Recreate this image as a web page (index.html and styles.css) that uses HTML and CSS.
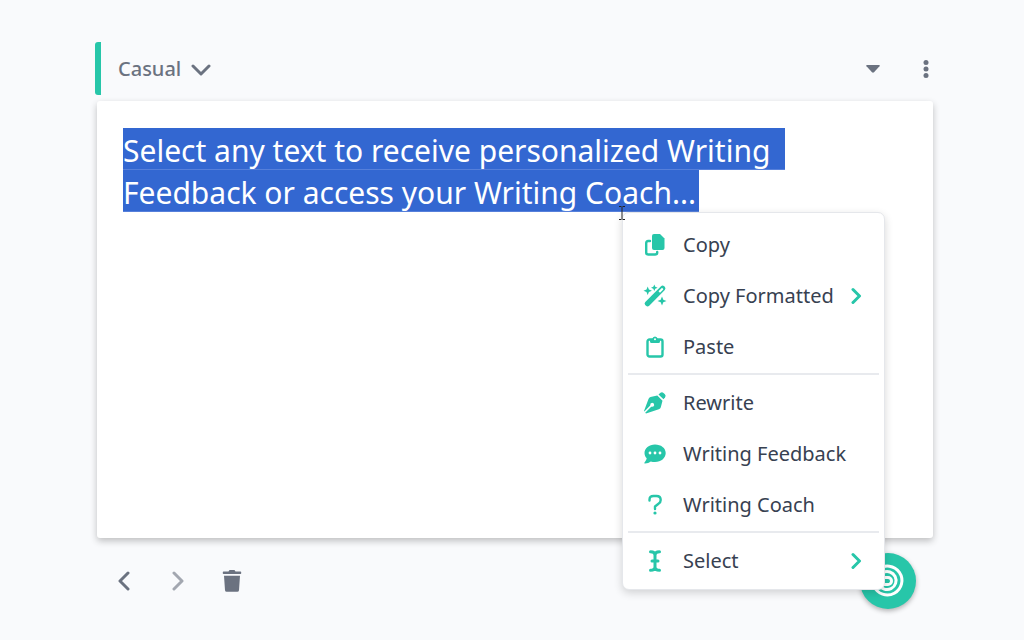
FILE: index.html
```html
<!DOCTYPE html>
<html lang="en">
<head>
  <meta charset="UTF-8" />
  <meta name="viewport" content="width=device-width, initial-scale=1" />
  <title>Writing Coach</title>
  <link rel="stylesheet" href="styles.css">
</head>
<body>
  <main class="page">
    <header class="toolbar">
      <label class="tone">
        <select class="tone-select" aria-label="Tone">
          <option>Casual</option>
        </select>
        <svg width="20" height="14" viewBox="0 0 20 14"><path d="M2 4l8 8 8-8" /></svg>
      </label>
      <div class="toolbar-actions">
        <button class="icon-btn" aria-label="Collapse">
          <svg width="14" height="8" viewBox="0 0 14 8"><path d="M1 0h12q1.300 .2.500 1.300L8 7.300q-1 .9-2 0L.5 1.300Q-.3.200 1 0z" /></svg>
        </button>
        <button class="icon-btn" aria-label="More">
          <svg width="6" height="20" viewBox="0 0 6 20"><circle cx="3" cy="3.500" r="2.500" /><circle cx="3" cy="10" r="2.500" /><circle cx="3" cy="16.500" r="2.500" /></svg>
        </button>
      </div>
    </header>

    <section class="card">
      <div class="editor" role="textbox" aria-label="Text" contenteditable="true" spellcheck="false">
        <div class="line line-wide">Select any text to receive personalized Writing</div>
        <div class="line">Feedback or access your Writing Coach...</div>
      </div>

      <div class="menu" role="menu">
        <button class="menu-item" role="menuitem">
          <svg class="menu-icon" viewBox="0 0 22 22">
            <path class="stroke" d="M6 7H4.200Q2.200 7 2.200 9v9.500q0 2 2 2h7q2 0 2-2V18" />
            <path d="M10 0h6L20.500 4.500V14q0 2-2 2H10q-2 0-2-2V2q0-2 2-2z" />
          </svg>
          <span class="menu-text">Copy</span>
        </button>
        <button class="menu-item" role="menuitem">
          <svg class="menu-icon" viewBox="0 0 22 22">
            <path fill-rule="evenodd" d="M1.300 17L17 1.200q1.600-1.400 3.200 0l.6.600q1.400 1.600 0 3.200L5.200 20.700q-1.600 1.400-3.200 0l-.8-.8q-1.300-1.500.1-2.900zM14.500 6.200l1.500 1.500 3-3q.5-.6.100-1-.8-.9-1.600-.5z" />
            <path d="M3.700 1.500l1.200 3 3 1.200-3 1.200-1.200 3-1.200-3-3-1.200 3-1.200zM10.300-.5l1 2.300 2.300 1-2.300 1-1 2.300-1-2.300-2.300-1 2.300-1zM18 11.500l1.300 3.200 3.200 1.300-3.200 1.300-1.300 3.200-1.300-3.200-3.200-1.300 3.200-1.300z" />
          </svg>
          <span class="menu-text">Copy Formatted</span>
          <svg class="menu-arrow" viewBox="0 0 12 18"><path d="M2 2.500l6.500 6.500L2 15.500" /></svg>
        </button>
        <button class="menu-item" role="menuitem">
          <svg class="menu-icon" viewBox="0 0 22 22">
            <rect class="stroke" x="3.500" y="3.500" width="15" height="17" rx="2" />
            <path d="M6 3h2.200Q8.800.500 11 .5T13.800 3H16v2.500q0 1.500-1.500 1.500h-7Q6 7 6 5.500z" />
            <circle cx="11" cy="3.300" r="1" fill="#fff" />
          </svg>
          <span class="menu-text">Paste</span>
        </button>
        <hr class="menu-line">
        <button class="menu-item" role="menuitem">
          <svg class="menu-icon" viewBox="0 0 22 22">
            <path d="M14.500 2.500L16.500.7q1.500-1.200 3 .2l1.400 1.400q1.400 1.500.2 3L19.500 7.300z" />
            <path d="M13.300 3.500l5.200 5.200-1.700 6.500q-.4 1.500-2 2L2 21.500l-.8-.8 6-6q2.300.5 3-1.400.2-2.300-2-2.500-2.200.3-2 2.800L.4 19.600 0 19 4.500 7q.5-1.500 2-2z" />
          </svg>
          <span class="menu-text">Rewrite</span>
        </button>
        <button class="menu-item" role="menuitem">
          <svg class="menu-icon" viewBox="0 0 22 22">
            <path d="M11 1.500C5 1.500.500 5.200.500 10c0 2.100.9 3.900 2.200 5.300-.3 1.700-1.200 3-2.200 4.100-.4.600 0 1 .5 1 2.200 0 4.300-.9 5.800-2 1.300.4 2.700.6 4.200.6 6 0 10.700-4 10.700-9S17 1.500 11 1.500z" />
            <g fill="#fff"><circle cx="6" cy="10" r="1.400" /><circle cx="11" cy="10" r="1.400" /><circle cx="16" cy="10" r="1.400" /></g>
          </svg>
          <span class="menu-text">Writing Feedback</span>
        </button>
        <button class="menu-item" role="menuitem">
          <svg class="menu-icon" viewBox="0 0 22 22">
            <path class="stroke" d="M5.500 6.500v-.7q0-3.800 4-3.800h3q4.200 0 4.200 4 0 2.500-2.200 3.800L11 12.500V15" />
            <circle cx="11" cy="19" r="1.600" />
          </svg>
          <span class="menu-text">Writing Coach</span>
        </button>
        <hr class="menu-line">
        <button class="menu-item" role="menuitem">
          <svg class="menu-icon" viewBox="0 0 22 22">
            <path class="stroke heavy" d="M6.500 1.700q4.500 0 4.500 3.600 0-3.600 4.500-3.600M11 5v12M6.500 20.300q4.500 0 4.500-3.600 0 3.600 4.500 3.600M8 11h6" />
          </svg>
          <span class="menu-text">Select</span>
          <svg class="menu-arrow" viewBox="0 0 12 18"><path d="M2 2.500l6.500 6.500L2 15.500" /></svg>
        </button>
      </div>

      <svg class="cursor" width="8" height="16" viewBox="0 0 8 16"><path d="M1 1.500h2.500M4.500 1.500H7M4 2v12M1 14.500h2.500M4.500 14.500H7" /></svg>
    </section>

    <footer class="bottom-bar">
      <button class="nav-btn" aria-label="Previous">
        <svg width="12" height="20" viewBox="0 0 12 20"><path class="chevron" d="M10 2l-8 8 8 8" /></svg>
      </button>
      <button class="nav-btn muted" aria-label="Next">
        <svg width="12" height="20" viewBox="0 0 12 20"><path class="chevron" d="M2 2l8 8-8 8" /></svg>
      </button>
      <button class="nav-btn" aria-label="Delete">
        <svg width="20" height="22" viewBox="0 0 20 22"><path d="M1.500 1.500h5L7.500 0h5l1 1.500h5q.7 0 .7.700v1q0 .8-.7.800h-17Q.800 4 .800 3.200v-1q0-.7.700-.7zM2 5.800h16l-1 14.400q-.2 1.500-1.700 1.500H4.700q-1.500 0-1.700-1.500z" /></svg>
      </button>
      <button class="coach-btn" aria-label="Writing Coach">
        <svg width="36" height="36" viewBox="0 0 36 36"><path d="M15 14.500h3a3.500 3.500 0 0 1 0 7h-5M13 9.500a9 9 0 1 1-4 12M8 6.500A14.500 14.500 0 1 1 4 23" /></svg>
      </button>
    </footer>
  </main>
</body>
</html>
```

FILE: styles.css
```css
* {
  box-sizing: border-box;
}

body {
  margin: 0;
  font-family: "Segoe UI", "Noto Sans", sans-serif;
  background: #f9fafc;
  color: #374151;
}

button {
  display: flex;
  align-items: center;
  justify-content: center;
  margin: 0;
  padding: 0;
  border: none;
  background: none;
  font-family: inherit;
  color: #6b7280;
  cursor: pointer;
}

svg {
  display: block;
  fill: currentColor;
}

.page {
  display: flex;
  flex-direction: column;
  min-height: 100vh;
  padding: 42px 91px 31px 95px;
}

/* top bar */
.toolbar {
  position: relative;
  display: flex;
  align-items: center;
  justify-content: space-between;
  height: 53px;
  margin-bottom: 6px;
  padding-left: 23px;
}

.toolbar::before {
  content: "";
  position: absolute;
  left: 0;
  top: 0;
  bottom: 0;
  width: 6px;
  border-radius: 3px 0 0 3px;
  background: #27c6a9;
}

.tone {
  display: flex;
  align-items: center;
  gap: 10px;
  color: #6b7280;
}

.tone-select {
  appearance: none;
  field-sizing: content;
  padding: 0;
  border: none;
  background: none;
  font-family: inherit;
  font-size: 20px;
  font-weight: 500;
  color: inherit;
}

.tone svg,
.chevron {
  fill: none;
  stroke: currentColor;
  stroke-width: 3;
  stroke-linecap: round;
  stroke-linejoin: round;
}

.tone svg {
  pointer-events: none;
}

.toolbar-actions {
  display: flex;
  gap: 39px;
}

.icon-btn {
  width: 14px;
  height: 28px;
}

/* editor */
.card {
  position: relative;
  flex: 1;
  margin-left: 2px;
  padding: 27px 26px;
  border-radius: 3px;
  background: #fff;
  box-shadow: 0 3px 7px rgba(0, 0, 0, 0.24);
}

.editor {
  font-size: 30px;
  line-height: 36px;
  color: #fff;
  outline: none;
}

.line {
  width: fit-content;
  padding: 5px 3px 0 0;
  border-bottom: 1px solid #5680db;
  background: #3367d1;
}

.line-wide {
  padding-right: 15px;
}

/* context menu */
.menu {
  position: absolute;
  top: 111px;
  left: 525px;
  z-index: 2;
  width: 263px;
  padding: 6px 5px 3px;
  border: 1px solid #e5e7eb;
  border-radius: 7px;
  background: #fff;
  box-shadow: 0 3px 8px rgba(0, 0, 0, 0.16);
}

.menu-item {
  justify-content: flex-start;
  width: 100%;
  height: 51px;
  padding: 0 16px;
  font-size: 20px;
  color: #27c6a9;
}

.menu-icon {
  width: 22px;
  height: 22px;
  margin-right: 17px;
  overflow: visible;
}

.menu-text {
  flex: 1;
  text-align: left;
  white-space: nowrap;
  color: #374151;
}

.menu-arrow {
  width: 12px;
  height: 18px;
}

.menu-arrow path,
.stroke {
  fill: none;
  stroke: currentColor;
  stroke-width: 2.4;
  stroke-linecap: round;
  stroke-linejoin: round;
}

.menu-arrow path,
.heavy {
  stroke-width: 3;
}

.menu-line {
  height: 2px;
  margin: 1px 0 2px;
  border: none;
  background: #e8eaee;
}

.cursor {
  position: absolute;
  top: 104px;
  left: 521px;
  z-index: 3;
  fill: none;
  stroke: #222;
  stroke-width: 1;
}

/* bottom bar */
.bottom-bar {
  display: flex;
  align-items: center;
  gap: 26px;
  padding: 15px 17px 0 15px;
}

.nav-btn {
  width: 28px;
  height: 28px;
}

.muted {
  color: #a3a7b0;
}

.coach-btn {
  width: 56px;
  height: 56px;
  margin-left: auto;
  border-radius: 50%;
  background: #27c6a9;
  box-shadow: 0 2px 5px rgba(0, 0, 0, 0.3);
  color: #fff;
}

.coach-btn path {
  fill: none;
  stroke: currentColor;
  stroke-width: 3;
  stroke-linecap: round;
}
```
